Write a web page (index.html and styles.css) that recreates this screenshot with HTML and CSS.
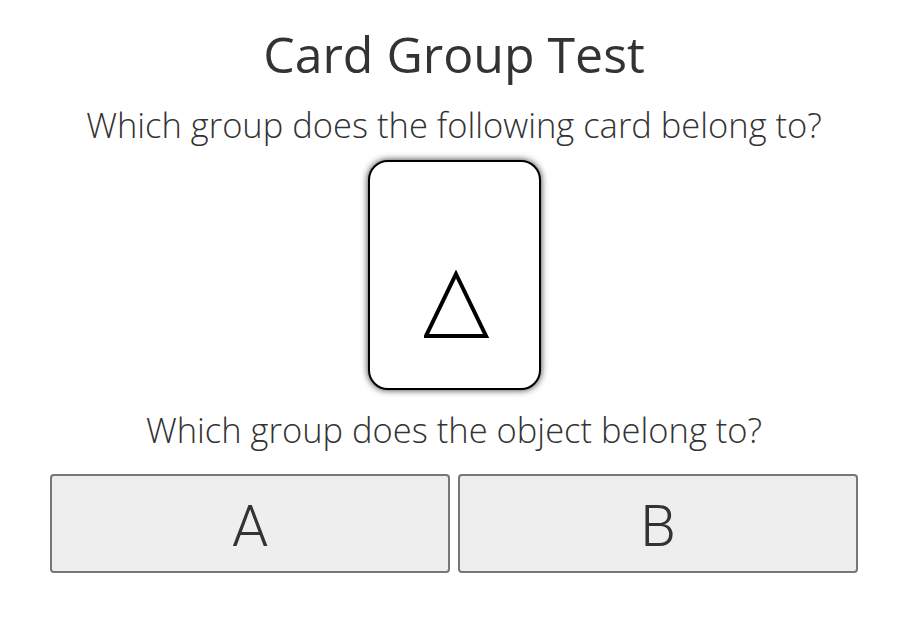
FILE: index.html
```html
<!DOCTYPE html>
<html>
<head>
<meta charset="utf-8">
<link rel="stylesheet" href="styles.css">
</head>
<body>
<main class="page">
  <h1 class="title">Card Group Test</h1>
  <p class="question">Which group does the following card belong to?</p>
  <div class="card">
    <svg class="shape" width="66" height="70" viewBox="0 0 66 70">
      <polygon points="32,4 62,66 2,66" fill="none" stroke="#000" stroke-width="4" stroke-linejoin="miter"/>
    </svg>
  </div>
  <p class="question second">Which group does the object belong to?</p>
  <div class="choices">
    <button class="choice">A</button>
    <button class="choice">B</button>
  </div>
</main>
</body>
</html>
```

FILE: styles.css
```css
html, body {
  margin: 0;
  padding: 0;
  background: #fff;
}
body {
  font-family: "Open Sans", "Liberation Sans", sans-serif;
  color: #333;
}
.page {
  width: 808px;
  margin: 0 0 0 50px;
  padding-top: 22px;
  display: flex;
  flex-direction: column;
  align-items: center;
}
.title {
  margin: 0;
  font-size: 50px;
  font-weight: 400;
  line-height: 64px;
  color: #333;
}
.question {
  margin: 0;
  margin-top: 19px;
  font-size: 34.5px;
  font-weight: 300;
  line-height: 40px;
  color: #333;
  white-space: nowrap;
}
.card {
  margin-top: 15px;
  width: 169px;
  height: 226px;
  border: 2px solid #000;
  border-radius: 20px;
  box-shadow: 0 0 7px rgba(0, 0, 0, 0.8);
  background: #fff;
  display: flex;
  justify-content: center;
  align-items: flex-start;
}
.shape {
  margin-top: 108px;
  margin-left: 5px;
}
.second {
  margin-top: 20px;
}
.choices {
  margin-top: 24px;
  width: 100%;
  display: flex;
  gap: 8px;
}
.choice {
  flex: 1;
  height: 99px;
  background: #eee;
  border: 2px solid #777;
  border-radius: 4px;
  font-family: Roboto, "Liberation Sans", sans-serif;
  font-weight: 300;
  font-size: 58px;
  color: #333;
  padding: 4px 0 0;
  line-height: 1;
}
```
